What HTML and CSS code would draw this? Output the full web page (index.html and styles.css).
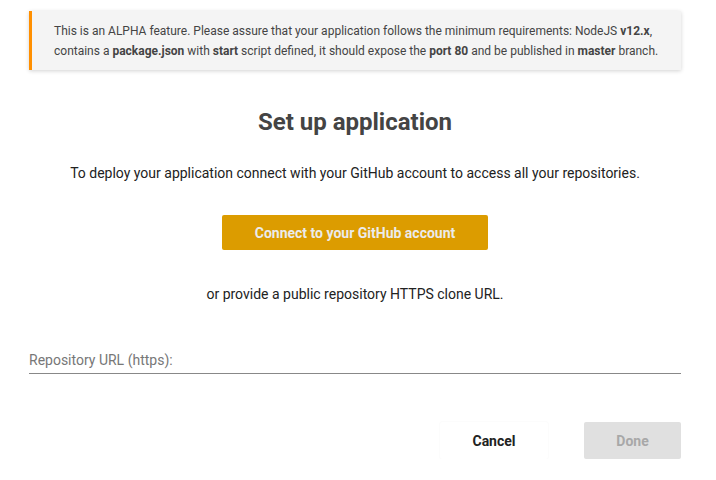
FILE: index.html
```html
<!DOCTYPE html>
<html>
<head>
<meta charset="utf-8">
<link rel="stylesheet" href="styles.css">
</head>
<body>
<div class="page">
  <div class="alert">
    This is an ALPHA feature. Please assure that your application follows the minimum requirements: NodeJS <b>v12.x</b>, contains a <b>package.json</b> with <b>start</b> script defined, it should expose the <b>port 80</b> and be published in <b>master</b> branch.
  </div>
  <h1 class="title">Set up application</h1>
  <p class="lead">To deploy your application connect with your GitHub account to access all your repositories.</p>
  <div class="center">
    <button class="github">Connect to your GitHub account</button>
  </div>
  <p class="or">or provide a public repository HTTPS clone URL.</p>
  <div class="field">
    <span class="label">Repository URL (https):</span>
  </div>
  <div class="actions">
    <button class="cancel">Cancel</button>
    <button class="done">Done</button>
  </div>
</div>
</body>
</html>
```
FILE: styles.css
```css
html, body {
  margin: 0;
  padding: 0;
  background: #fff;
  font-family: Roboto, "Liberation Sans", sans-serif;
}
.page {
  width: 652px;
  margin-left: 29px;
  padding-top: 11px;
}
.alert {
  background: #f4f4f4;
  border-left: 3px solid #ff8f00;
  box-shadow: 0 1px 4px rgba(0,0,0,0.18);
  padding: 10px 20px 9px 22px;
  font-size: 12px;
  line-height: 20px;
  color: #444;
}
.alert b {
  font-weight: 700;
}
.title {
  margin: 36px 0 0;
  text-align: center;
  font-size: 24px;
  line-height: 32px;
  font-weight: 700;
  color: #444;
}
.lead {
  margin: 25px 0 0;
  text-align: center;
  font-size: 14px;
  line-height: 20px;
  color: #222;
}
.center {
  display: flex;
  justify-content: center;
  margin-top: 32px;
}
.github {
  width: 266px;
  height: 35px;
  border: none;
  border-radius: 2px;
  background: #dc9c00;
  color: #ebebeb;
  font-family: inherit;
  font-size: 14px;
  font-weight: 700;
  padding: 0;
}
.or {
  margin: 34px 0 0;
  text-align: center;
  font-size: 14px;
  line-height: 20px;
  color: #222;
}
.field {
  margin-top: 46px;
  border-bottom: 1px solid #888;
  padding-bottom: 3px;
}
.label {
  display: block;
  font-size: 14px;
  line-height: 20px;
  color: #777;
}
.actions {
  display: flex;
  justify-content: flex-end;
  gap: 36px;
  margin-top: 48px;
}
.actions button {
  height: 37px;
  border: none;
  border-radius: 2px;
  font-family: inherit;
  font-size: 14px;
  font-weight: 700;
  padding: 0;
}
.cancel {
  width: 108px;
  background: #fff;
  color: #222;
  box-shadow: 0 0 2px rgba(0,0,0,0.06);
}
.done {
  width: 97px;
  background: #e0e0e0;
  color: #a8a8a8;
}
```
